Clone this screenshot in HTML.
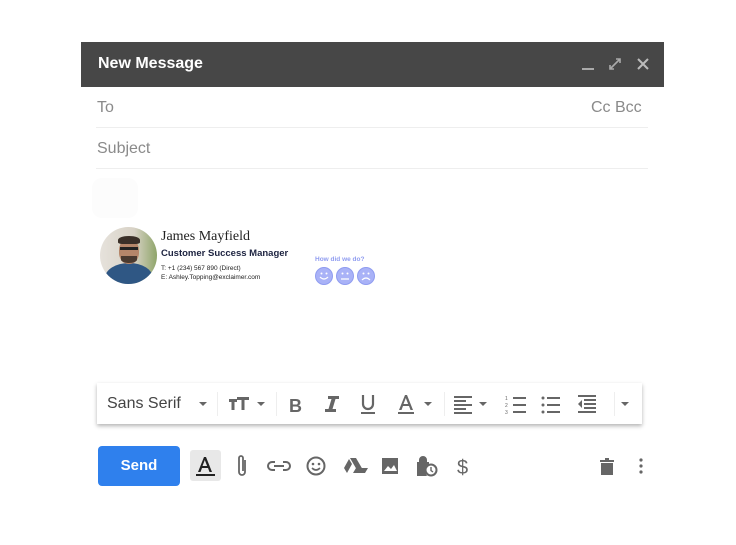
<!DOCTYPE html>
<html><head><meta charset="utf-8"><style>
*{margin:0;padding:0;box-sizing:border-box}
body{width:736px;height:545px;background:#fff;position:relative;font-family:"Liberation Sans",sans-serif;overflow:hidden}
.a{position:absolute}
.g{color:#8a8a8a}
svg{position:absolute}
</style></head><body>
<div class="a" style="left:81px;top:42px;width:583px;height:45px;background:#474747"></div>
<div class="a" style="left:98px;top:55px;color:#fff;font-weight:bold;font-size:16px">New Message</div>
<div class="a" style="left:582px;top:68px;width:12px;height:2px;background:#aaa"></div>
<svg style="left:608px;top:57px" width="14" height="14" viewBox="0 0 14 14" stroke="#aaa" stroke-width="1.6" fill="none"><path d="M2 12L12 2M8 2h4v4M2 8v4h4"/></svg>
<svg style="left:637px;top:58px" width="12" height="12" viewBox="0 0 12 12" stroke="#bbb" stroke-width="2"><path d="M1 1L11 11M11 1L1 11"/></svg>
<div class="a g" style="left:97px;top:99px;font-size:16px">To</div>
<div class="a g" style="left:591px;top:99px;font-size:16px">Cc Bcc</div>
<div class="a" style="left:96px;top:127px;width:552px;height:1px;background:#eee"></div>
<div class="a g" style="left:97px;top:140px;font-size:16px">Subject</div>
<div class="a" style="left:96px;top:168px;width:552px;height:1px;background:#eee"></div>
<div class="a" style="left:92px;top:178px;width:46px;height:40px;border-radius:10px;background:#fcfcfc"></div>
<div class="a" style="left:100px;top:227px;width:57px;height:57px;border-radius:50%;overflow:hidden;background:linear-gradient(90deg,#e6e2dc,#d8d2c6 60%,#8fa56a)">
 <div class="a" style="left:5px;top:36px;width:48px;height:30px;border-radius:50% 50% 0 0;background:#2f5784"></div>
 <div class="a" style="left:19px;top:12px;width:20px;height:25px;border-radius:45%;background:#b5866a"></div>
 <div class="a" style="left:18px;top:9px;width:22px;height:8px;border-radius:50% 50% 20% 20%;background:#3a2f28"></div>
 <div class="a" style="left:20px;top:20px;width:18px;height:3px;background:#222"></div>
 <div class="a" style="left:21px;top:29px;width:16px;height:7px;border-radius:0 0 50% 50%;background:#4a3a30"></div>
</div>
<div class="a" style="left:161px;top:229px;font-family:'Liberation Serif',serif;font-size:14px;color:#222">James Mayfield</div>
<div class="a" style="left:161px;top:248px;font-size:9.5px;font-weight:bold;color:#1d2340">Customer Success Manager</div>
<div class="a" style="left:161px;top:265px;font-size:6.5px;color:#222">T: +1 (234) 567 890 (Direct)</div>
<div class="a" style="left:161px;top:274px;font-size:6.5px;color:#222">E: Ashley.Topping@exclaimer.com</div>
<div class="a" style="left:315px;top:256px;font-size:6.5px;font-weight:bold;color:#8f9cf0">How did we do?</div>
<svg style="left:315px;top:266px" width="62" height="20" viewBox="0 0 62 20"><g fill="#a9b2f7" stroke="#8f9cf0" stroke-width="1"><circle cx="9" cy="10" r="8.5"/><circle cx="30" cy="10" r="8.5"/><circle cx="51" cy="10" r="8.5"/></g><g stroke="#fff" stroke-width="1.2" fill="none"><path d="M5 11q4 4 8 0M26 13h8M47 14q4-4 8 0"/></g><g fill="#fff"><circle cx="6.5" cy="7.5" r="1"/><circle cx="11.5" cy="7.5" r="1"/><circle cx="27.5" cy="7.5" r="1"/><circle cx="32.5" cy="7.5" r="1"/><circle cx="48.5" cy="7.5" r="1"/><circle cx="53.5" cy="7.5" r="1"/></g></svg>
<div class="a" style="left:97px;top:383px;width:545px;height:41px;background:#fff;box-shadow:0 2px 4px rgba(0,0,0,.3)"></div>
<div class="a" style="left:107px;top:395px;font-size:16px;color:#444">Sans Serif</div>
<svg style="left:97px;top:383px" width="545" height="41" viewBox="0 0 545 41" fill="#666" stroke="none">
<path d="M102 19h8l-4 4zM160 19h8l-4 4zM327 19h8l-4 4zM382 19h8l-4 4zM524 19h8l-4 4z"/>
<rect x="120" y="9" width="1" height="24" fill="#eee"/><rect x="179" y="9" width="1" height="24" fill="#eee"/><rect x="347" y="9" width="1" height="24" fill="#eee"/><rect x="517" y="9" width="1" height="24" fill="#eee"/>
<path d="M132 16h8v3h-2.5v8h-3v-8H132zM140 14h12v3h-4.5v10h-3V17H140z"/>
<text x="192" y="29" font-family="Liberation Sans" font-weight="bold" font-size="18">B</text>
<path d="M231 13h11v3h-3.5l-3 10h3.5v3h-11v-3h3.5l3-10h-3.5z"/>
<path d="M266 12v9a5 5 0 0 0 10 0v-9" stroke="#666" stroke-width="2.2" fill="none"/><rect x="264" y="29" width="14" height="2"/>
<path d="M302 27l6-15h2l6 15h-2.5l-1.5-4h-6l-1.5 4zM306.5 21h4.6l-2.3-6z"/><rect x="301" y="29" width="16" height="2"/>
<path d="M357 13h18v2h-18zM357 17h12v2h-12zM357 21h18v2h-18zM357 25h12v2h-12zM357 29h18v2h-18z"/>
<path d="M416 14h13v2h-13zM416 21h13v2h-13zM416 28h13v2h-13z"/><text x="408" y="17" font-size="5" font-family="Liberation Sans">1</text><text x="408" y="24" font-size="5" font-family="Liberation Sans">2</text><text x="408" y="31" font-size="5" font-family="Liberation Sans">3</text>
<path d="M450 14h13v2h-13zM450 21h13v2h-13zM450 28h13v2h-13z"/><circle cx="446" cy="15" r="1.5"/><circle cx="446" cy="22" r="1.5"/><circle cx="446" cy="29" r="1.5"/>
<path d="M481 12h18v2h-18zM487 16h12v2h-12zM487 20h12v2h-12zM487 24h12v2h-12zM481 28h18v2h-18zM485 17v8l-4-4z"/>
</svg>
<div class="a" style="left:98px;top:446px;width:82px;height:40px;background:#2f80ed;border-radius:4px;color:#fff;font-weight:bold;font-size:15px;text-align:center;line-height:40px">Send</div>
<div class="a" style="left:190px;top:450px;width:31px;height:31px;background:#e8e8e8;border-radius:3px"></div>
<svg style="left:190px;top:440px" width="470" height="50" viewBox="0 0 470 50" fill="#666">
<path d="M8 32l6-15h2l6 15h-2.5l-1.5-4h-6l-1.5 4zM12.5 26h4.6l-2.3-6z" fill="#222"/><rect x="6" y="34" width="19" height="2" fill="#222"/>
<path d="M55 20v12a3 3 0 0 1-6 0v-14a2 2 0 0 1 4 0v13" stroke="#666" stroke-width="1.8" fill="none"/>
<path d="M85 22h-3a4 4 0 0 0 0 8h3M93 22h3a4 4 0 0 1 0 8h-3M84 26h10" stroke="#666" stroke-width="2" fill="none"/>
<circle cx="126" cy="26" r="8.5" stroke="#666" stroke-width="2" fill="none"/><circle cx="123" cy="24" r="1.3"/><circle cx="129" cy="24" r="1.3"/><path d="M122 28q4 4 8 0" stroke="#666" stroke-width="1.6" fill="none"/>
<path d="M160 18h6l7 12h-6zM159 19l3 5-5 9-3-5zM163 33l3-5h12l-3 5z"/>
<path d="M192 18h16v16h-16zM194 31l4-5 3 3 3-4 3 6z"/><path d="M194 31l4-5 3 3 3-4 3 6z" fill="#fff"/>
<path d="M229 22v-2a4 4 0 0 1 8 0v2h2v4a7 7 0 0 0-2 10h-10v-14z"/><circle cx="241" cy="30" r="5.5" stroke="#666" stroke-width="2" fill="#fff"/><path d="M241 27v3.5l2 1.5" stroke="#666" stroke-width="1.4" fill="none"/>
<text x="267" y="34" font-family="Liberation Sans" font-size="20">$</text>
<path d="M410 20h14v2h-14zM415 18h4v2h-4zM411 23h12v12h-12z"/>
<circle cx="451" cy="20" r="1.6"/><circle cx="451" cy="26" r="1.6"/><circle cx="451" cy="32" r="1.6"/>
</svg>
</body></html>
